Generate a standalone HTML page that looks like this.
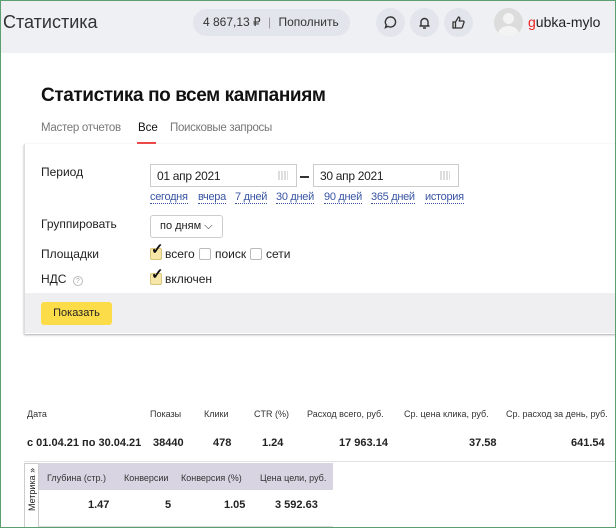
<!DOCTYPE html><html><head><meta charset="utf-8"><style>
*{margin:0;padding:0;box-sizing:border-box}
body{width:616px;height:528px;overflow:hidden;font-family:"Liberation Sans",sans-serif;background:#fff;position:relative;color:#222}
.a{position:absolute;white-space:nowrap}
.frame{position:absolute;inset:0;border:1px solid #5c9e70;pointer-events:none;z-index:9}
.lnk{position:absolute;color:#3a55a4;border-bottom:1px dotted #3a55a4;font-size:11px;letter-spacing:-0.3px;white-space:nowrap;top:191px}
.ic{position:absolute;width:29px;height:29px;border-radius:50%;background:#e2e5ec;top:8px}
.cb{position:absolute;width:12px;height:12px;border:1px solid #bbb;border-radius:2px;background:#fff}
.cb.on{background:#f6e7a8;border-color:#d8c47a}
.ck{position:absolute;font-size:15px;font-weight:bold;color:#111}
.th{font-size:9px;color:#333}
.td{font-size:11px;font-weight:bold}
</style></head><body>
<div class="frame"></div>
<div class="a" style="left:0;top:0;width:616px;height:53px;background:#eef0f4"></div>
<div class="a" style="left:3px;top:12px;font-size:18px;color:#333">Статистика</div>
<div class="a" style="left:193px;top:9px;width:157px;height:27px;border-radius:14px;background:#e2e5ec"></div>
<div class="a" style="left:203px;top:15px;font-size:12px;color:#333">4 867,13 ₽ <span style="color:#999;margin:0 4px">|</span> Пополнить</div>
<div class="ic" style="left:376px"></div><div class="ic" style="left:410px"></div><div class="ic" style="left:444px"></div>
<svg class="a" style="left:383px;top:15px;z-index:2" width="15" height="15" viewBox="0 0 15 15" fill="none" stroke="#333" stroke-width="1.4"><path d="M7.5 2a5 5 0 1 1-2.5 9.3L2.5 12.5l.8-2.6A5 5 0 0 1 7.5 2z"/></svg>
<svg class="a" style="left:417px;top:15px;z-index:2" width="15" height="15" viewBox="0 0 15 15" fill="none" stroke="#333" stroke-width="1.4"><path d="M4 11V7a3.5 3.5 0 0 1 7 0v4h1.5H2.5zM6 13h3"/></svg>
<svg class="a" style="left:451px;top:15px;z-index:2" width="15" height="15" viewBox="0 0 15 15" fill="none" stroke="#333" stroke-width="1.3"><path d="M2 7h2.5v6H2zM4.5 7l3-5c1 0 1.5.8 1.3 2L8.3 6H12c.8 0 1.3.7 1 1.4l-1.6 4.8c-.2.5-.6.8-1.1.8H4.5"/></svg>
<div class="a" style="left:494px;top:8px;width:29px;height:29px;border-radius:50%;background:#dcdcdc;overflow:hidden"><div style="position:absolute;left:9px;top:5px;width:11px;height:11px;border-radius:50%;background:#f3f3f3"></div><div style="position:absolute;left:4px;top:18px;width:21px;height:16px;border-radius:50%;background:#f3f3f3"></div></div>
<div class="a" style="left:528px;top:14px;font-size:14px;color:#222"><span style="color:#e22">g</span>ubka-mylo</div>
<div class="a" style="left:41px;top:85px;font-size:19px;letter-spacing:-0.4px;font-weight:bold;color:#111">Статистика по всем кампаниям</div>
<div class="a" style="left:41px;top:122px;font-size:11.5px;letter-spacing:-0.3px;color:#777">Мастер отчетов</div>
<div class="a" style="left:138px;top:122px;font-size:11.5px;color:#111">Все</div>
<div class="a" style="left:137px;top:142px;width:19px;height:2px;background:#e44"></div>
<div class="a" style="left:170px;top:122px;font-size:11.5px;letter-spacing:-0.3px;color:#777">Поисковые запросы</div>
<div class="a" style="left:24px;top:144px;width:600px;height:190px;border-left:1px solid #ddd;box-shadow:0 1px 2px #aaa"></div>
<div class="a" style="left:25px;top:293px;width:600px;height:40px;background:#efeff1"></div>
<div class="a" style="left:41px;top:165px;font-size:12px">Период</div>
<div class="a" style="left:150px;top:164px;width:147px;height:23px;border:1px solid #ccc"></div>
<div class="a" style="left:157px;top:169px;font-size:12px;letter-spacing:-0.3px">01 апр 2021</div>
<div class="a" style="left:300px;top:176px;width:9px;height:2px;background:#333"></div>
<div class="a" style="left:313px;top:164px;width:146px;height:23px;border:1px solid #ccc"></div>
<div class="a" style="left:320px;top:169px;font-size:12px;letter-spacing:-0.3px">30 апр 2021</div>
<div class="a" style="left:278px;top:171px;width:10px;height:9px;background:repeating-linear-gradient(90deg,#ddd 0 2px,#fff 2px 3px)"></div>
<div class="a" style="left:440px;top:171px;width:10px;height:9px;background:repeating-linear-gradient(90deg,#ddd 0 2px,#fff 2px 3px)"></div>
<span class="lnk" style="left:150px">сегодня</span>
<span class="lnk" style="left:198px">вчера</span>
<span class="lnk" style="left:235px">7 дней</span>
<span class="lnk" style="left:276px">30 дней</span>
<span class="lnk" style="left:324px">90 дней</span>
<span class="lnk" style="left:371px">365 дней</span>
<span class="lnk" style="left:425px">история</span>
<div class="a" style="left:41px;top:217px;font-size:12px">Группировать</div>
<div class="a" style="left:150px;top:215px;width:73px;height:23px;border:1px solid #ccc;border-radius:3px"></div>
<div class="a" style="left:160px;top:220px;font-size:11px">по дням ⌵</div>
<div class="a" style="left:41px;top:247px;font-size:12px">Площадки</div>
<div class="cb on" style="left:150px;top:248px"></div><div class="ck" style="left:151px;top:240px">✓</div>
<div class="a" style="left:165px;top:247px;font-size:12px">всего</div>
<div class="cb" style="left:199px;top:248px"></div><div class="a" style="left:215px;top:247px;font-size:12px">поиск</div>
<div class="cb" style="left:250px;top:248px"></div><div class="a" style="left:266px;top:247px;font-size:12px">сети</div>
<div class="a" style="left:41px;top:272px;font-size:12px">НДС <span style="display:inline-block;width:10px;height:10px;border:1px solid #bbb;border-radius:50%;font-size:7px;color:#aaa;text-align:center;line-height:9px;margin-left:3px">?</span></div>
<div class="cb on" style="left:150px;top:273px"></div><div class="ck" style="left:151px;top:265px">✓</div>
<div class="a" style="left:165px;top:272px;font-size:12px">включен</div>
<div class="a" style="left:41px;top:302px;width:71px;height:23px;background:#fddc4a;border-radius:3px;font-size:11px;text-align:center;line-height:23px">Показать</div>
<div class="a th" style="left:27px;top:409px">Дата</div>
<div class="a th" style="left:150px;top:409px">Показы</div>
<div class="a th" style="left:204px;top:409px">Клики</div>
<div class="a th" style="left:254px;top:409px">CTR (%)</div>
<div class="a th" style="left:307px;top:409px">Расход всего, руб.</div>
<div class="a th" style="left:404px;top:409px">Ср. цена клика, руб.</div>
<div class="a th" style="left:506px;top:409px">Ср. расход за день, руб.</div>
<div class="a td" style="left:27px;top:437px">с 01.04.21 по 30.04.21</div>
<div class="a td" style="left:153px;top:437px">38440</div>
<div class="a td" style="left:213px;top:437px">478</div>
<div class="a td" style="left:262px;top:437px">1.24</div>
<div class="a td" style="left:339px;top:437px">17 963.14</div>
<div class="a td" style="left:469px;top:437px">37.58</div>
<div class="a td" style="left:571px;top:437px">641.54</div>
<div class="a" style="left:24px;top:461px;width:592px;height:1px;background:#e2e2e2"></div>
<div class="a" style="left:24px;top:463px;width:15px;height:65px;border:1px solid #ccc;border-bottom:none"></div>
<div class="a" style="left:16px;top:490px;font-size:9px;transform:rotate(-90deg);transform-origin:center;width:32px;text-align:center">Метрика »</div>
<div class="a" style="left:39px;top:463px;width:294px;height:27px;background:#d9d4e2"></div>
<div class="a th" style="left:47px;top:473px">Глубина (стр.)</div>
<div class="a th" style="left:124px;top:473px">Конверсии</div>
<div class="a th" style="left:181px;top:473px">Конверсия (%)</div>
<div class="a th" style="left:260px;top:473px">Цена цели, руб.</div>
<div class="a td" style="left:88px;top:499px">1.47</div>
<div class="a td" style="left:165px;top:499px">5</div>
<div class="a td" style="left:224px;top:499px">1.05</div>
<div class="a td" style="left:275px;top:499px">3 592.63</div>
<div class="a" style="left:39px;top:526px;width:294px;height:1px;background:#ddd"></div>
</body></html>
